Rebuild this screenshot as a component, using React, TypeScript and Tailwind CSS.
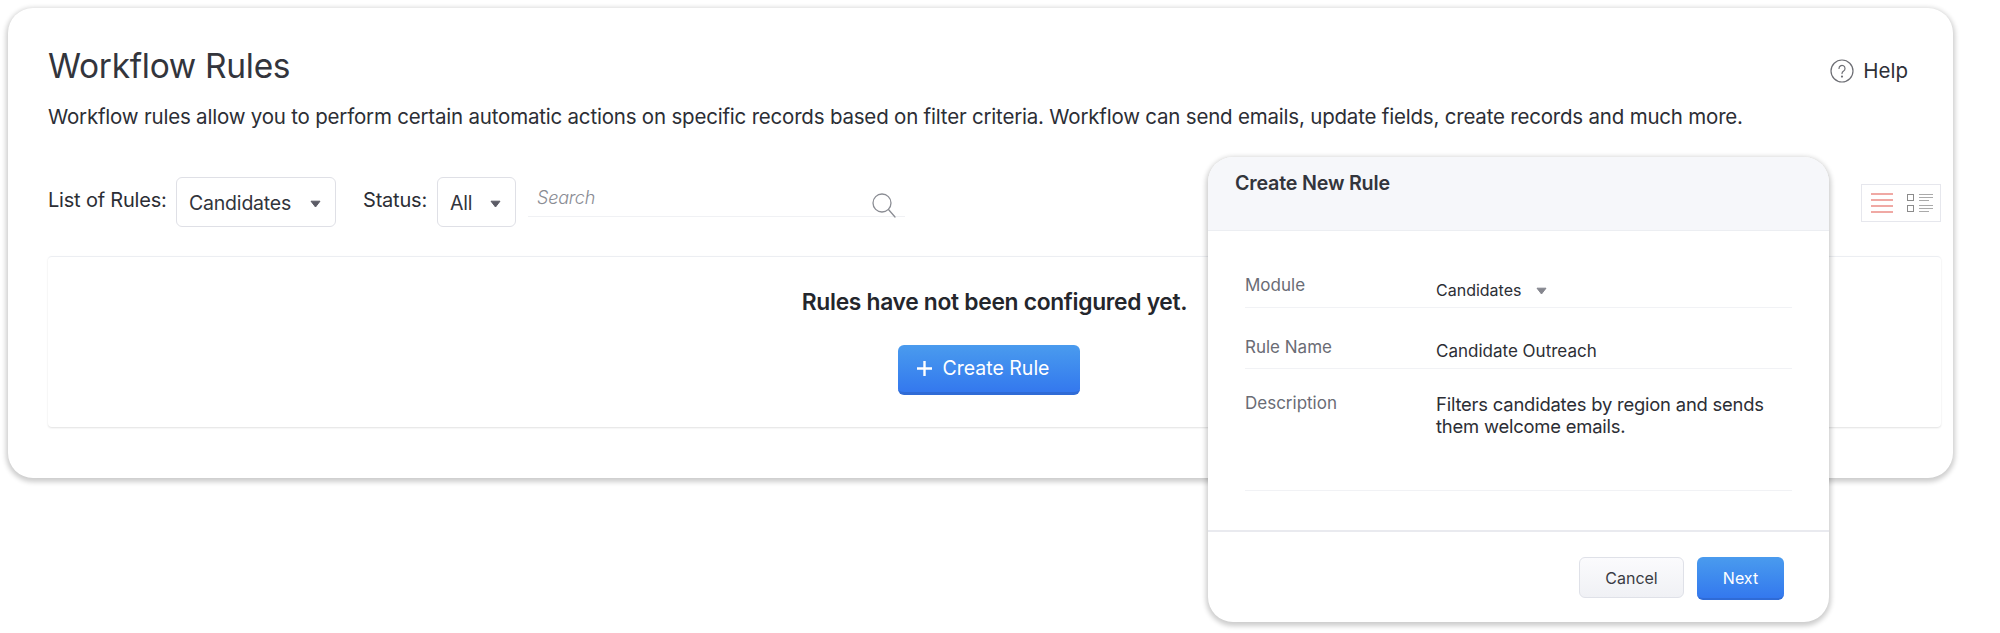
const font = { fontFamily: "Inter, 'Liberation Sans', sans-serif" };

function Caret({ className, color = "#5c5c66" }: { className?: string; color?: string }) {
  return (
    <svg width="11" height="8" viewBox="0 0 11 8" className={className}>
      <path d="M1 1.2h9L5.5 7z" fill={color} stroke={color} strokeLinejoin="round" />
    </svg>
  );
}

function Select({ label, width }: { label: string; width: string }) {
  return (
    <div className={`flex h-[50px] items-center justify-between rounded-md border border-[#dfe0e6] pl-3 pr-3.5 text-[19.5px] tracking-[-0.2px] text-[#32343c] ${width}`}>
      <span className="pt-1">{label}</span>
      <Caret className="mt-1" />
    </div>
  );
}

function ViewToggle() {
  return (
    <div className="flex h-[38px] w-[80px] items-center border border-[#e6e7ed] pl-[9px]">
      <div className="flex w-[22px] flex-col gap-[4px]">
        <div className="h-[2px] bg-[#f0a9a4]" />
        <div className="h-[2px] bg-[#f0a9a4]" />
        <div className="h-[2px] bg-[#f0a9a4]" />
        <div className="h-[2px] bg-[#f0a9a4]" />
      </div>
      <div className="ml-[14px] flex flex-col gap-[4px]">
        {[0, 1].map((i) => (
          <div key={i} className="flex items-center gap-[5px]">
            <div className="h-[7px] w-[7px] border border-[#8b8b8b]" />
            <div className="flex w-[14px] flex-col gap-[2px]">
              <div className="h-px bg-[#aaa]" />
              <div className="h-px bg-[#aaa]" />
              <div className="h-px w-[10px] bg-[#aaa]" />
            </div>
          </div>
        ))}
      </div>
    </div>
  );
}

function Field({ label, children, className }: { label: string; children: React.ReactNode; className?: string }) {
  return (
    <div className={`flex border-b border-[#f1f2f5] text-[17px] ${className ?? ""}`}>
      <div className="w-[191px] shrink-0 text-[#6a6c75]">{label}</div>
      <div className="text-[#2c2e35]">{children}</div>
    </div>
  );
}

function CreateRuleModal() {
  return (
    <div className="absolute left-[1208px] top-[157px] flex h-[465px] w-[621px] flex-col overflow-hidden rounded-[25px] bg-white shadow-[0_2px_5px_2px_rgba(0,0,0,0.2)]">
      <div className="h-[74px] shrink-0 border-b border-[#eceef2] bg-[#f6f7fa] pl-[27px] pt-[14px] text-[19.7px] font-semibold leading-6 tracking-[-0.2px] text-[#33353c]">
        Create New Rule
      </div>
      <div className="flex-1 px-[37px] pt-[42px]">
        <Field label="Module" className="h-[35px] leading-6">
          <div className="flex items-center gap-[15px] pt-[7px] text-[16px] leading-5">
            Candidates
            <Caret className="mt-0.5" color="#85868e" />
          </div>
        </Field>
        <Field label="Rule Name" className="mt-[27px] h-[34px] leading-6">
          <div className="pt-1.5 text-[17px] leading-5">Candidate Outreach</div>
        </Field>
        <Field label="Description" className="mt-[22px] h-[100px] leading-6">
          <div className="w-[355px] pt-0.5 text-[18.4px] leading-[22px] tracking-[-0.2px]">
            Filters candidates by region and sends them welcome emails.
          </div>
        </Field>
      </div>
      <div className="flex h-[92px] shrink-0 items-start justify-end gap-[13px] border-t-2 border-[#e9eaef] pl-[37px] pr-[45px] pt-[25px]">
        <button className="h-[41px] w-[105px] rounded-md border border-[#dfe1e8] bg-gradient-to-b from-[#fbfbfd] to-[#f0f1f5] text-[16px] text-[#3a3c44]">
          Cancel
        </button>
        <button className="h-[43px] w-[87px] rounded-md border-b-2 border-[#2f6bd6] bg-gradient-to-b from-[#4a9bee] to-[#3478ee] text-[16px] text-white">
          Next
        </button>
      </div>
    </div>
  );
}

export default function App() {
  return (
    <div className="relative h-[633px] w-[2000px] bg-white" style={font}>
      <div className="pl-2 pr-[47px] pt-2">
        <div className="h-[470px] rounded-[25px] bg-white pl-10 pr-3 pt-[35px] shadow-[0_2px_5px_2px_rgba(0,0,0,0.2)]">
          {/* Title + help */}
          <div className="flex items-start justify-between">
            <h1 className="text-[33.5px] font-normal leading-[46px] tracking-[-0.3px] text-[#33353c]">Workflow Rules</h1>
            <div className="mr-[33px] mt-[13px] flex items-center gap-[9px] text-[20.5px] text-[#2e3037]">
              <svg width="24" height="24" viewBox="0 0 24 24" fill="none" stroke="#6d6e74" strokeWidth="1.2">
                <circle cx="12" cy="12" r="11" />
                <path d="M9 9.4a3 3 0 1 1 4.6 2.6c-1 .6-1.6 1.2-1.6 2.6" strokeLinecap="round" />
                <circle cx="12" cy="17.6" r=".5" fill="#6d6e74" />
              </svg>
              Help
            </div>
          </div>
          <p className="mt-[14px] text-[20.5px] leading-7 tracking-[-0.2px] text-[#2c2e35]">
            Workflow rules allow you to perform certain automatic actions on specific records based on filter criteria. Workflow can send emails, update fields, create records and much more.
          </p>

          {/* Filter row */}
          <div className="mt-[46px] flex items-start text-[20px] tracking-[-0.2px] text-[#2c2e35]">
            <div className="mt-[9px] w-[128px] leading-7">List of Rules:</div>
            <Select label="Candidates" width="w-[160px]" />
            <div className="ml-[27px] mt-[9px] w-[74px] leading-7">Status:</div>
            <Select label="All" width="w-[79px]" />
            <div className="ml-3 flex h-[40px] w-[377px] items-start justify-between border-b border-[#f0f1f4] pl-[9px] pr-[9px]">
              <span className="mt-[9px] text-[18px] font-light italic leading-6 text-[#8a8c94]">Search</span>
              <svg width="24" height="25" viewBox="0 0 24 25" fill="none" stroke="#8b8d94" strokeWidth="1.3" className="mt-[16px]">
                <circle cx="10" cy="10" r="9" />
                <path d="M16.5 16.5l6.5 7.5" strokeLinecap="round" />
              </svg>
            </div>
            <div className="ml-auto mt-[7px]">
              <ViewToggle />
            </div>
          </div>

          {/* Empty state */}
          <div className="mt-[29px] flex h-[171px] flex-col items-center rounded-sm border-t border-[#eceef2] pt-[31px] shadow-[0_1px_2px_rgba(0,0,0,0.12)]">
            <div className="text-[22.8px] font-semibold leading-7 tracking-[-0.3px] text-[#24262c]">Rules have not been configured yet.</div>
            <button className="mr-[12px] mt-[29px] flex h-[50px] w-[182px] items-center gap-[11px] rounded-md border-b-[3px] border-[#2f6bd6] bg-gradient-to-b from-[#4a9bee] to-[#3478ee] pl-[19px] text-[19.5px] text-white">
              <svg width="15" height="15" viewBox="0 0 15 15" stroke="white" strokeWidth="2.4">
                <path d="M7.5 0v15M0 7.5h15" />
              </svg>
              Create Rule
            </button>
          </div>
        </div>
      </div>
      <CreateRuleModal />
    </div>
  );
}
